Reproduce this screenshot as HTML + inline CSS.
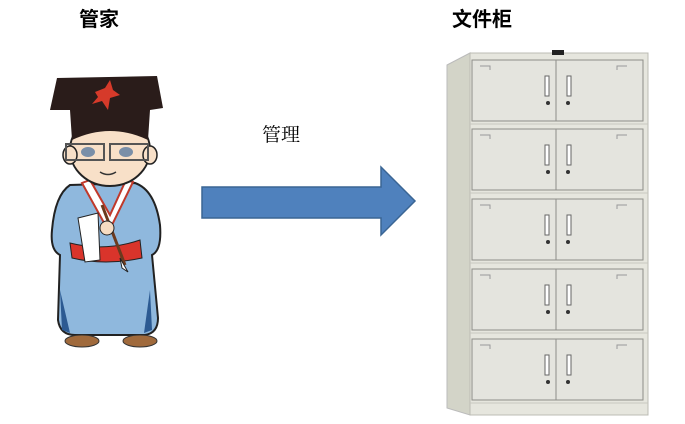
<!DOCTYPE html>
<html><head><meta charset="utf-8"><style>
html,body{margin:0;padding:0;background:#fff;width:685px;height:424px;overflow:hidden}
.t{position:absolute;font-family:"Liberation Sans","Noto Sans CJK SC",sans-serif;color:#000}
</style></head><body>
<div class="t" style="left:79px;top:3px;font-size:20px;font-weight:bold">管家</div>
<div class="t" style="left:452px;top:3px;font-size:20px;font-weight:bold">文件柜</div>
<div class="t" style="left:262px;top:120px;font-size:19px;font-family:'Noto Serif CJK SC',serif">管理</div>
<svg width="685" height="424" style="position:absolute;left:0;top:0">
<!-- arrow -->
<polygon points="202,187 381,187 381,167 415,201 381,235 381,218 202,218" fill="#4f81bd" stroke="#3a6594" stroke-width="1.5"/>
<!-- figure -->
<g>
<!-- robe -->
<path d="M70,185 Q55,195 52,230 Q50,250 60,255 L58,320 Q60,335 75,335 L145,335 Q158,333 158,318 L152,255 Q162,250 160,225 Q155,190 135,183 Z" fill="#8fb8dd" stroke="#222" stroke-width="2"/>
<path d="M60,290 L62,330 L70,333 Z M150,290 L152,330 L144,333 Z" fill="#2c5a92"/>
<!-- collar -->
<path d="M82,183 L108,230 L112,225 L133,182 L126,180 L110,215 L90,180 Z" fill="#fff" stroke="#c0392b" stroke-width="2"/>
<!-- sash -->
<path d="M70,243 Q105,252 140,240 L142,258 Q105,266 72,258 Z" fill="#d9342b" stroke="#222" stroke-width="1"/>
<!-- sleeve -->
<path d="M78,218 L98,213 L100,260 L85,262 Z" fill="#fff" stroke="#222" stroke-width="1"/>
<line x1="102" y1="205" x2="125" y2="265" stroke="#6b3a1e" stroke-width="3"/>
<path d="M120,258 L128,272 L122,268 Z" fill="#fff" stroke="#222"/>
<circle cx="107" cy="228" r="7" fill="#f6dcc2" stroke="#222" stroke-width="1"/>
<!-- feet -->
<ellipse cx="82" cy="341" rx="17" ry="6" fill="#a06a3c" stroke="#333"/>
<ellipse cx="140" cy="341" rx="17" ry="6" fill="#a06a3c" stroke="#333"/>
<!-- face -->
<ellipse cx="110" cy="150" rx="40" ry="36" fill="#f8e0c8" stroke="#222" stroke-width="2"/>
<ellipse cx="70" cy="155" rx="7" ry="9" fill="#f8e0c8" stroke="#222" stroke-width="1.5"/>
<ellipse cx="150" cy="155" rx="7" ry="9" fill="#f8e0c8" stroke="#222" stroke-width="1.5"/>
<rect x="66" y="144" width="38" height="16" fill="none" stroke="#555" stroke-width="2"/>
<rect x="110" y="144" width="38" height="16" fill="none" stroke="#555" stroke-width="2"/>
<ellipse cx="88" cy="152" rx="7" ry="5" fill="#7a8fa8"/>
<ellipse cx="126" cy="152" rx="7" ry="5" fill="#7a8fa8"/>
<path d="M100,172 Q108,177 116,172" fill="none" stroke="#333" stroke-width="1.5"/>
<!-- hat -->
<path d="M57,78 L157,76 L163,108 L150,110 L148,140 Q110,122 72,140 L70,110 L50,110 Z" fill="#2a1c1a"/>
<path d="M95,92 L105,88 L110,80 L113,90 L120,95 L110,98 L108,110 L102,101 L92,104 L98,97 Z" fill="#d63a2a"/>
</g>
<!-- cabinet -->
<path d="M447,65 L470,53 L470,415 L447,408 Z" fill="#d3d4c8" stroke="#bbb"/>
<rect x="470" y="53" width="178" height="362" fill="#e6e6de" stroke="#bcbcb4"/>
<rect x="552" y="50" width="12" height="5" fill="#222"/>
<g id="row">
<rect x="472" y="60" width="84" height="61" fill="#e4e4de" stroke="#8d8d88"/>
<rect x="556" y="60" width="87" height="61" fill="#e4e4de" stroke="#8d8d88"/>
<rect x="545" y="76" width="4" height="20" fill="#fff" stroke="#666"/>
<rect x="567" y="76" width="4" height="20" fill="#fff" stroke="#666"/>
<circle cx="548" cy="103" r="2" fill="#333"/><circle cx="568" cy="103" r="2" fill="#333"/>
<path d="M480,66 h10 v4 M627,66 h-10 v4" fill="none" stroke="#999"/>
<line x1="470" y1="124" x2="648" y2="124" stroke="#c8c8c0"/>
</g>
<use href="#row" y="69"/><use href="#row" y="139"/><use href="#row" y="209"/><use href="#row" y="279"/>
</svg>
</body></html>
